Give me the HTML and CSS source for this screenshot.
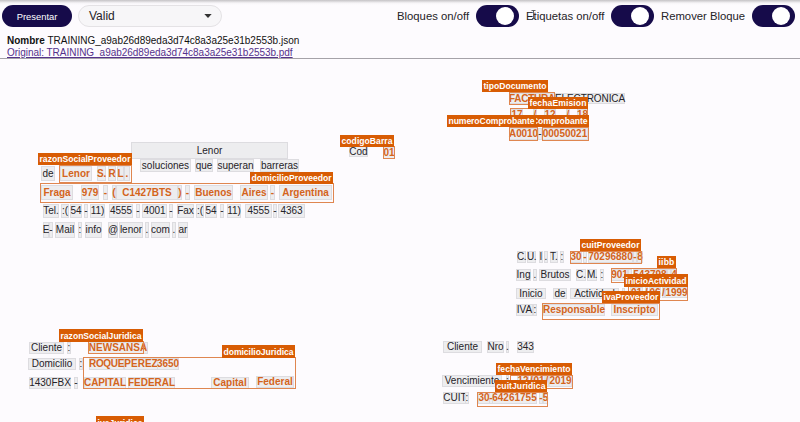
FILE: index.html
```
<!DOCTYPE html>
<html lang="es">
<head>
<meta charset="utf-8">
<title>Presentar</title>
<link rel="stylesheet" href="styles.css">
</head>
<body>
<header class="topbar">
  <div class="controls">
    <button class="submit">Presentar</button>
    <div class="select"><span>Valid</span><svg class="caret" viewBox="0 0 8 4"><path d="M0.3 0h7.4L4 4z"/></svg></div>
    <div class="switches">
      <label class="option blocks"><span class="option-text">Bloques on/off</span><span class="switch"><i class="knob"></i></span></label>
      <label class="option labels"><span class="option-text">Etiquetas on/off</span><span class="switch"><i class="knob"></i></span></label>
      <label class="option remove"><span class="option-text">Remover Bloque</span><span class="switch"><i class="knob"></i></span></label>
    </div>
    <svg class="cursor" viewBox="0 0 5 9"><path d="M0.5 0.5h4M2.5 0.5v8M1 8.5h3"/></svg>
  </div>
  <div class="file"><b>Nombre</b> TRAINING_a9ab26d89eda3d74c8a3a25e31b2553b.json</div>
  <a class="file original">Original: TRAINING_a9ab26d89eda3d74c8a3a25e31b2553b.pdf</a>
</header>
<main class="canvas" id="canvas"></main>
<script src="app.js"></script>
</body>
</html>
```
FILE: styles.css
```
* { box-sizing: border-box; }
body {
  margin: 0;
  height: 422px;
  overflow: hidden;
  position: relative;
  background: #fdfbfe;
  color: #252328;
  font-family: "Liberation Sans", Arial, sans-serif;
}
.topbar {
  height: 59px;
  padding: 5px 5px 0 2px;
  border-bottom: 1px solid #a5a2a8;
  background: linear-gradient(#c5c3c6 0, #d4d2d5 1px, #f6f4f7 3px, #fdfbfe 5px);
  overflow: hidden;
}
.controls { display: flex; align-items: center; height: 22px; position: relative; }
.submit {
  width: 70px;
  height: 22px;
  padding: 0;
  border: 0;
  border-radius: 11px;
  background: #160b4a;
  color: #fff;
  font: 9.4px "Liberation Sans", Arial, sans-serif;
}
.select {
  display: flex;
  align-items: center;
  justify-content: space-between;
  width: 144px;
  height: 22px;
  margin-left: 6px;
  padding: 0 9px 0 10px;
  border: 1px solid #e4e2e5;
  border-radius: 11px;
  background: #f7f6f8;
  font-size: 12px;
}
.caret { width: 8px; height: 4px; fill: #333; }
.switches { display: flex; margin-left: auto; gap: 7px; }
.option { display: flex; align-items: center; justify-content: space-between; font-size: 11.3px; }
.blocks { width: 122px; }
.labels { width: 128px; }
.remove { width: 134px; }
.option-text { white-space: nowrap; }
.switch {
  display: flex;
  align-items: center;
  width: 43px;
  height: 22px;
  padding-left: 20px;
  border-radius: 11px;
  background: #160b4a;
}
.knob { width: 18px; height: 18px; border-radius: 50%; background: #fff; }
.cursor { position: absolute; left: 529px; top: 5px; width: 5px; height: 9px; fill: none; stroke: #444; stroke-width: 0.8; }
.file { display: block; margin-left: 5px; font-size: 10px; line-height: 12px; white-space: nowrap; color: #111; }
div.file { margin-top: 8px; }
.original { color: #55328c; text-decoration: underline 1px; text-underline-offset: 1px; letter-spacing: -0.03px; }
.canvas { height: 363px; }
.token, .group, .tag {
  position: absolute;
  display: flex;
  align-items: center;
  justify-content: center;
  white-space: pre;
}
.token { font-size: 10px; line-height: 10px; background: #ededef; box-shadow: inset 0 0 0 1px #dddce0; }
.value { color: #d4641c; font-weight: bold; }
.group { border: 1px solid #df8650; }
.tag { background: #d85c04; color: #fff; font-size: 8.6px; line-height: 10px; font-weight: bold; }
```
FILE: app.js
```
// Tokens by line: [top, height, value?, [left, right, text], ...]
const lines = [
  [142, 17, 0, [131, 288, "Lenor"]],
  [159, 13, 0, [140, 191, "soluciones"], [195, 213, "que"], [217, 254, "superan"], [260, 299, "barreras"]],
  [166, 15, 0, [41, 55, "de"]],
  [166, 15, 1, [60, 92, "Lenor"], [97, 106, "S."], [108, 116, "R"], [117, 124, "L"], [124, 130, "."]],
  [185, 15, 1, [41, 73, "Fraga"], [81, 99, "979"], [103, 108, "-"], [112, 116, "("], [116, 178, "C1427BTS"], [178, 182, ")"], [185, 190, "-"], [194, 233, "Buenos"], [240, 268, "Aires"], [270, 275, "-"], [279, 332, "Argentina"]],
  [204, 14, 0, [43, 59, "Tel."], [61, 69, ":("], [70, 82, "54"], [84, 88, "-"], [90, 105, "11)"], [109, 133, "4555"], [136, 140, "-"], [142, 167, "4001"], [169, 173, "-"], [177, 194, "Fax"], [196, 204, ":("], [205, 217, "54"], [220, 224, "-"], [227, 241, "11)"], [245, 272, "4555"], [273, 277, "-"], [278, 305, "4363"]],
  [222, 16, 0, [43, 49, "E"], [49, 53, "-"], [55, 75, "Mail"], [78, 82, ":"], [85, 102, "info"], [108, 118, "@"], [119, 143, "lenor"], [145, 149, "."], [151, 170, "com"], [172, 176, "."], [178, 188, "ar"]],
  [146, 11, 0, [349, 368, "Cod"]],
  [147, 12, 1, [383, 395, "01"]],
  [93, 11, 1, [509, 555, "FACTURA"]],
  [93, 11, 0, [555, 625, "ELECTRONICA"]],
  [109, 11, 1, [511, 523, "17"], [533, 537, "/"], [544, 556, "12"], [566, 570, "/"], [577, 588, "18"]],
  [128, 12, 1, [509, 538, "A0010"], [542, 588, "00050021"]],
  [128, 12, 0, [538, 542, "-"]],
  [251, 12, 0, [517, 526, "C."], [527, 536, "U."], [539, 543, "I"], [544, 548, "."], [550, 558, "T."], [560, 564, ":"]],
  [251, 12, 1, [570, 582, "30"], [583, 587, "-"], [588, 633, "70296880"], [633, 637, "-"], [637, 643, "8"]],
  [269, 12, 0, [516, 531, "Ing"], [533, 537, "."], [539, 571, "Brutos"], [576, 586, "C."], [587, 597, "M."], [600, 604, ":"]],
  [269, 12, 1, [611, 628, "901"], [628, 632, "-"], [633, 667, "543798"], [667, 671, "-"], [671, 677, "4"]],
  [288, 11, 0, [516, 546, "Inicio"], [553, 567, "de"], [570, 619, "Actividad"], [622, 625, ":"]],
  [287, 11, 1, [630, 643, "01"], [645, 648, "/"], [649, 661, "06"], [662, 665, "/"], [665, 688, "1999"]],
  [304, 12, 0, [516, 533, "IVA"], [533, 537, ":"]],
  [304, 12, 1, [543, 605, "Responsable"], [611, 658, "Inscripto"]],
  [342, 12, 0, [29, 64, "Cliente"], [67, 71, ":"]],
  [342, 12, 1, [88, 148, "NEWSANSA"]],
  [358, 12, 0, [28, 76, "Domicilio"], [79, 83, ":"]],
  [358, 12, 1, [89, 124, "ROQUE"], [124, 158, "PEREZ"], [157, 179, "3650"]],
  [377, 12, 0, [29, 71, "1430FBX"], [74, 78, "-"]],
  [377, 12, 1, [84, 126, "CAPITAL"], [128, 175, "FEDERAL"], [211, 249, "Capital"]],
  [376, 12, 1, [256, 294, "Federal"]],
  [341, 12, 0, [443, 482, "Cliente"], [487, 504, "Nro"], [506, 509, "."], [517, 534, "343"]],
  [375, 12, 0, [442, 502, "Vencimiento"], [506, 509, ":"]],
  [375, 12, 1, [517, 529, "12"], [530, 533, "/"], [533, 545, "01"], [545, 549, "/"], [549, 572, "2019"]],
  [392, 12, 0, [443, 467, "CUIT"], [465, 469, ":"]],
  [392, 12, 1, [478, 490, "30"], [489, 493, "-"], [492, 537, "64261755"], [539, 543, "-"], [543, 548, "5"]]
];

// Field outlines: [left, top, right, bottom]
const groups = [
  [59, 165, 132, 183], [40, 183, 334, 203], [383, 146, 395, 159],
  [509, 92, 555, 105], [510, 108, 588, 121], [509, 127, 538, 141], [542, 127, 589, 141],
  [570, 251, 642, 264], [611, 268, 677, 283], [628, 286, 688, 301], [542, 303, 660, 320],
  [88, 341, 144, 354], [83, 357, 296, 389], [510, 375, 573, 389], [477, 392, 548, 407]
];

// Field names: [left, top, right, bottom, text]
const tags = [
  [38, 153, 132, 165, "razonSocialProveedor"],
  [250, 172, 333, 184, "domicilioProveedor"],
  [340, 135, 394, 147, "codigoBarra"],
  [482, 80, 548, 92, "tipoDocumento"],
  [499, 115, 589, 127, "numeroComprobante"],
  [528, 97, 588, 109, "fechaEmision"],
  [447, 115, 536, 127, "numeroComprobante"],
  [580, 239, 641, 251, "cuitProveedor"],
  [657, 256, 676, 268, "iibb"],
  [624, 274, 688, 287, "inicioActividad"],
  [602, 291, 660, 303, "ivaProveedor"],
  [59, 329, 143, 342, "razonSocialJuridica"],
  [222, 345, 295, 358, "domicilioJuridica"],
  [96, 416, 144, 429, "ivaJuridica"],
  [496, 363, 572, 375, "fechaVencimiento"],
  [495, 380, 547, 392, "cuitJuridica"]
];

const canvas = document.getElementById("canvas");

function place(cls, l, t, r, b, text) {
  const box = document.createElement("div");
  box.className = cls;
  box.style.cssText = `left:${l}px;top:${t}px;width:${r - l}px;height:${b - t}px`;
  canvas.append(box);
  if (!text) return;
  const span = document.createElement("span");
  span.textContent = text;
  box.append(span);
  const natural = span.getBoundingClientRect().width;
  const room = r - l - (cls === "tag" ? 3 : 0);
  if (cls === "tag" || natural > room && text.length > 1) {
    const gap = (room - natural) / text.length;
    span.style.letterSpacing = `${gap}px`;
  }
}

for (const [top, height, value, ...tokens] of lines) {
  for (const [l, r, text] of tokens) {
    place(value ? "token value" : "token", l, top, r, top + height, text);
  }
}
groups.forEach(g => place("group", ...g));
tags.forEach(t => place("tag", ...t));
```
